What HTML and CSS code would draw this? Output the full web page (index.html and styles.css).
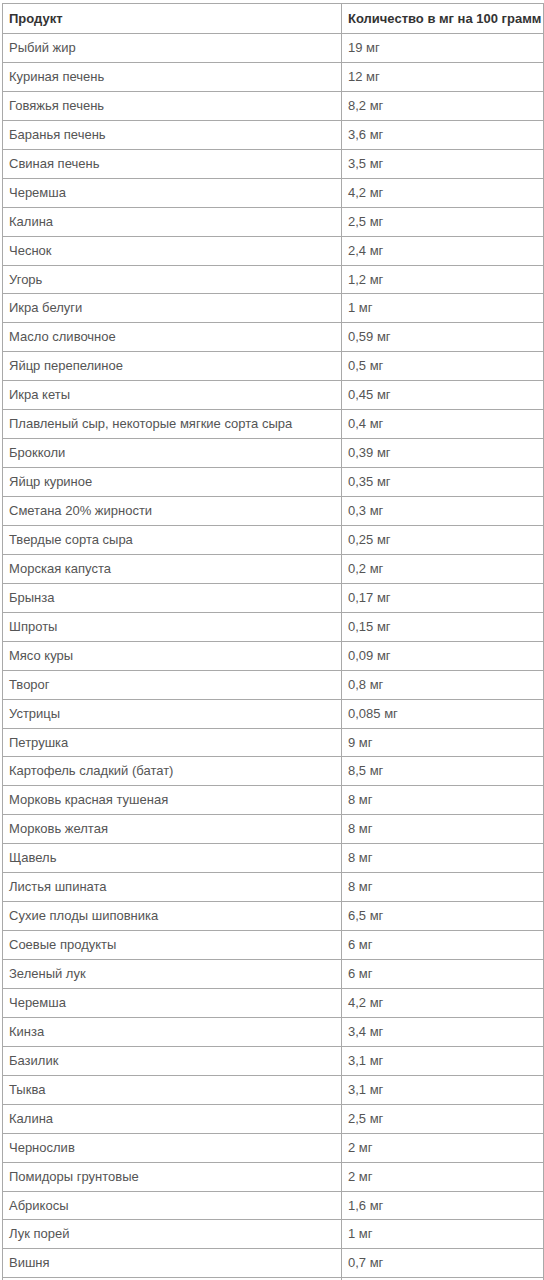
FILE: index.html
```html
<!DOCTYPE html>
<html lang="ru">
<head>
<meta charset="utf-8">
<link rel="stylesheet" href="styles.css">
</head>
<body>
<table class="vit">
<colgroup><col class="col1"><col class="col2"></colgroup>
<thead>
<tr><th>Продукт</th><th>Количество в мг на 100 грамм</th></tr>
</thead>
<tbody>
<tr><td>Рыбий жир</td><td>19 мг</td></tr>
<tr><td>Куриная печень</td><td>12 мг</td></tr>
<tr><td>Говяжья печень</td><td>8,2 мг</td></tr>
<tr><td>Баранья печень</td><td>3,6 мг</td></tr>
<tr><td>Свиная печень</td><td>3,5 мг</td></tr>
<tr><td>Черемша</td><td>4,2 мг</td></tr>
<tr><td>Калина</td><td>2,5 мг</td></tr>
<tr><td>Чеснок</td><td>2,4 мг</td></tr>
<tr><td>Угорь</td><td>1,2 мг</td></tr>
<tr><td>Икра белуги</td><td>1 мг</td></tr>
<tr><td>Масло сливочное</td><td>0,59 мг</td></tr>
<tr><td>Яйцр перепелиное</td><td>0,5 мг</td></tr>
<tr><td>Икра кеты</td><td>0,45 мг</td></tr>
<tr><td>Плавленый сыр, некоторые мягкие сорта сыра</td><td>0,4 мг</td></tr>
<tr><td>Брокколи</td><td>0,39 мг</td></tr>
<tr><td>Яйцр куриное</td><td>0,35 мг</td></tr>
<tr><td>Сметана 20% жирности</td><td>0,3 мг</td></tr>
<tr><td>Твердые сорта сыра</td><td>0,25 мг</td></tr>
<tr><td>Морская капуста</td><td>0,2 мг</td></tr>
<tr><td>Брынза</td><td>0,17 мг</td></tr>
<tr><td>Шпроты</td><td>0,15 мг</td></tr>
<tr><td>Мясо куры</td><td>0,09 мг</td></tr>
<tr><td>Творог</td><td>0,8 мг</td></tr>
<tr><td>Устрицы</td><td>0,085 мг</td></tr>
<tr><td>Петрушка</td><td>9 мг</td></tr>
<tr><td>Картофель сладкий (батат)</td><td>8,5 мг</td></tr>
<tr><td>Морковь красная тушеная</td><td>8 мг</td></tr>
<tr><td>Морковь желтая</td><td>8 мг</td></tr>
<tr><td>Щавель</td><td>8 мг</td></tr>
<tr><td>Листья шпината</td><td>8 мг</td></tr>
<tr><td>Сухие плоды шиповника</td><td>6,5 мг</td></tr>
<tr><td>Соевые продукты</td><td>6 мг</td></tr>
<tr><td>Зеленый лук</td><td>6 мг</td></tr>
<tr><td>Черемша</td><td>4,2 мг</td></tr>
<tr><td>Кинза</td><td>3,4 мг</td></tr>
<tr><td>Базилик</td><td>3,1 мг</td></tr>
<tr><td>Тыква</td><td>3,1 мг</td></tr>
<tr><td>Калина</td><td>2,5 мг</td></tr>
<tr><td>Чернослив</td><td>2 мг</td></tr>
<tr><td>Помидоры грунтовые</td><td>2 мг</td></tr>
<tr><td>Абрикосы</td><td>1,6 мг</td></tr>
<tr><td>Лук порей</td><td>1 мг</td></tr>
<tr><td>Вишня</td><td>0,7 мг</td></tr>
<tr><td></td><td></td></tr>
</tbody>
</table>
</body>
</html>
```

FILE: styles.css
```css
html, body {
  margin: 0;
  padding: 0;
  background: #ffffff;
}
body {
  padding: 3px 0 0 2px;
  overflow: hidden;
}
.vit {
  border-collapse: collapse;
  width: 542px;
  table-layout: fixed;
  font-family: "Liberation Sans", Arial, sans-serif;
  font-size: 13px;
  color: #555555;
}
.col1 {
  width: 339px;
}
.vit th, .vit td {
  border: 1px solid #a9a9a9;
  padding: 4px 6px;
  text-align: left;
  vertical-align: middle;
  line-height: 19.93px;
  height: 19.93px;
  white-space: nowrap;
}
.vit th {
  font-weight: bold;
  color: #333333;
  line-height: 21px;
  height: 21px;
}
```
